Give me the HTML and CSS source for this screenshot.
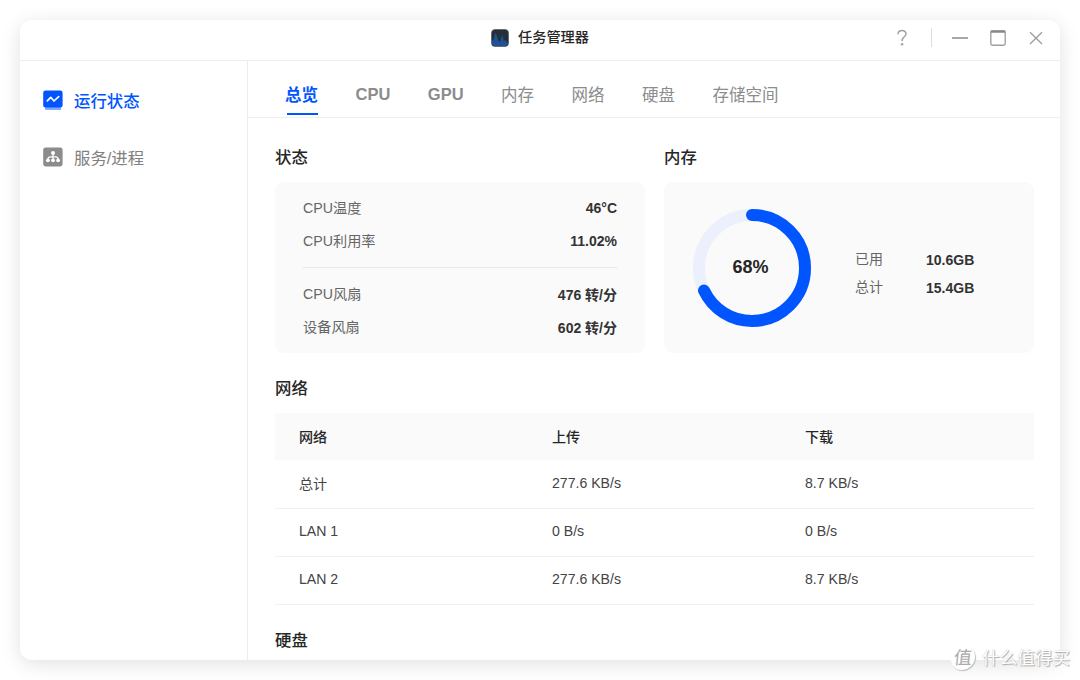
FILE: index.html
```
<!DOCTYPE html>
<html lang="zh-CN">
<head>
  <meta charset="UTF-8">
  <meta name="viewport" content="width=device-width, initial-scale=1">
  <title>任务管理器</title>
  <link rel="stylesheet" href="styles.css">
</head>
<body>

  <div class="window">
    <header class="titlebar">
      <div class="title">
        <svg class="app-icon" width="18" height="18" viewBox="0 0 18 18">
          <rect x="0.5" y="0.5" width="17" height="17" rx="3.5" fill="#252e3b" stroke="#5b6068" stroke-width="0.8"/>
          <path d="M1 15V12L2.6 10.5L4.6 3.5L6.6 9L8 13L9.3 12L11.2 5.5L12.8 12L14.2 11L16.9 14.5Q17 17 15 17H3Q1 17 1 15Z" fill="#1f5294"/>
        </svg>
        <span>任务管理器</span>
      </div>
      <div class="controls">
        <svg width="16" height="20" viewBox="0 0 16 20" fill="none" stroke="#a0a0a0" stroke-width="1.5">
          <path d="M4 6.2C4.2 1.4 12.2 1.5 12 6C11.9 8.8 8.1 9 8.1 12.9"/>
          <circle cx="8.1" cy="16.3" r="1.2" fill="#a0a0a0" stroke="none"/>
        </svg>
        <span class="split"></span>
        <svg width="18" height="18" viewBox="0 0 18 18" stroke="#a8a8a8" stroke-width="2">
          <path d="M1 9H17"/>
        </svg>
        <svg width="18" height="18" viewBox="0 0 18 18" fill="none" stroke="#a0a0a0" stroke-width="1.4">
          <rect x="1.8" y="1.8" width="14.4" height="14.4" rx="1.6"/>
          <path d="M1.8 2.7H16.2" stroke="#888" stroke-width="2"/>
        </svg>
        <svg width="18" height="18" viewBox="0 0 18 18" stroke="#a0a0a0" stroke-width="1.4">
          <path d="M3 3.2L15 15M15 3.2L3 15"/>
        </svg>
      </div>
    </header>

    <div class="body">
      <nav class="sidebar">
        <div class="nav-item active">
          <svg width="20" height="20" viewBox="0 0 20 20">
            <rect x="2" y="14" width="16" height="6" rx="1" fill="#80aaff"/>
            <rect x="0.2" y="0.4" width="19.4" height="17.2" rx="2.4" fill="#0055ff"/>
            <path d="M4.3 10.8L7.7 7.3L11 11L15.7 6.6" fill="none" stroke="#fff" stroke-width="1.7" stroke-linecap="round" stroke-linejoin="round"/>
          </svg>
          <span>运行状态</span>
        </div>
        <div class="nav-item">
          <svg width="20" height="20" viewBox="0 0 20 20">
            <rect x="0.2" y="0.4" width="19.4" height="19" rx="2.4" fill="#8c8c8c"/>
            <g fill="none" stroke="#fff" stroke-width="1.2">
              <path d="M10 7V12M4.8 12.5Q5 9.8 7.5 9.8H12.5Q15 9.8 15.2 12.5"/>
            </g>
            <g fill="#fff">
              <circle cx="10" cy="6" r="2"/>
              <circle cx="4.9" cy="13.3" r="1.9"/>
              <circle cx="10" cy="13.3" r="1.9"/>
              <circle cx="15.1" cy="13.3" r="1.9"/>
            </g>
          </svg>
          <span>服务/进程</span>
        </div>
      </nav>

      <main class="main">
        <div class="tabs">
          <div class="tab active">总览</div>
          <div class="tab latin">CPU</div>
          <div class="tab latin">GPU</div>
          <div class="tab">内存</div>
          <div class="tab">网络</div>
          <div class="tab">硬盘</div>
          <div class="tab">存储空间</div>
        </div>

        <div class="content">
          <div class="cards">
            <section>
              <h2>状态</h2>
              <div class="card status">
                <div class="row"><span>CPU温度</span><b>46°C</b></div>
                <div class="row"><span>CPU利用率</span><b>11.02%</b></div>
                <div class="divider"></div>
                <div class="row"><span>CPU风扇</span><b>476 转/分</b></div>
                <div class="row"><span>设备风扇</span><b>602 转/分</b></div>
              </div>
            </section>
            <section>
              <h2>内存</h2>
              <div class="card memory">
                <div class="ring">
                  <svg width="118" height="118" viewBox="0 0 118 118" fill="none" stroke-width="12">
                    <circle cx="59" cy="59" r="53" stroke="#ebf0fc"/>
                    <circle cx="59" cy="59" r="53" stroke="#0055ff" stroke-linecap="round" pathLength="100" stroke-dasharray="68 100" transform="rotate(-90 59 59)"/>
                  </svg>
                  <span class="percent">68%</span>
                </div>
                <div class="usage">
                  <span>已用</span><b>10.6GB</b>
                  <span>总计</span><b>15.4GB</b>
                </div>
              </div>
            </section>
          </div>

          <h2 class="net-title">网络</h2>
          <table>
            <thead>
              <tr><th>网络</th><th>上传</th><th>下载</th></tr>
            </thead>
            <tbody>
              <tr><td>总计</td><td>277.6 KB/s</td><td>8.7 KB/s</td></tr>
              <tr><td>LAN 1</td><td>0 B/s</td><td>0 B/s</td></tr>
              <tr><td>LAN 2</td><td>277.6 KB/s</td><td>8.7 KB/s</td></tr>
            </tbody>
          </table>

          <h2 class="disk-title">硬盘</h2>
        </div>
      </main>
    </div>
  </div>

  <div class="watermark">
    <span class="badge">值</span>
    <span>什么值得买</span>
  </div>

</body>
</html>
```
FILE: styles.css
```
* {
  box-sizing: border-box;
}
body {
  margin: 0;
  padding: 20px;
  height: 680px;
  overflow: hidden;
  background: #fff;
  color: #262626;
  font-family: "Liberation Sans", "Noto Sans CJK SC", sans-serif;
  font-size: 14px;
}
svg {
  display: block;
  flex: none;
}
.window {
  width: 1040px;
  height: 640px;
  display: flex;
  flex-direction: column;
  background: #fff;
  border-radius: 12px;
  box-shadow: 0 4px 20px rgba(0, 0, 0, 0.12);
  overflow: hidden;
}

/* title bar */
.titlebar {
  height: 41px;
  flex: none;
  display: grid;
  grid-template-columns: 1fr auto 1fr;
  align-items: center;
  padding-bottom: 5px;
  border-bottom: 1px solid #ededed;
}
.title {
  grid-column: 2;
  display: flex;
  align-items: center;
  gap: 9px;
  font-size: 14.2px;
  font-weight: 500;
  line-height: 20px;
}
.title span {
  margin-top: -2px;
}
.controls {
  display: flex;
  align-items: center;
  justify-content: flex-end;
  padding-right: 15px;
}
.controls svg + svg {
  margin-left: 20px;
}
.split {
  width: 1px;
  height: 19px;
  margin: 0 19px 0 21px;
  background: #ddd;
}

.body {
  flex: 1;
  display: flex;
  min-height: 0;
}

/* sidebar */
.sidebar {
  width: 228px;
  flex: none;
  padding: 11px 0 0 23px;
  border-right: 1px solid #ededed;
}
.nav-item {
  height: 56.5px;
  display: flex;
  align-items: center;
  gap: 11px;
  color: #808080;
  font-size: 16.4px;
}
.nav-item.active {
  color: #0055ff;
  font-weight: 500;
}

/* tabs */
.main {
  flex: 1;
}
.tabs {
  height: 57px;
  display: flex;
  gap: 37.5px;
  padding-left: 37px;
  border-bottom: 1px solid #efefef;
}
.tab {
  height: 54px;
  padding-top: 21px;
  line-height: 26px;
  font-size: 16.5px;
  color: #8c8c8c;
}
.tab.latin {
  padding-top: 20px;
  font-weight: bold;
}
.tab.active {
  color: #0055ff;
  font-weight: bold;
  background: linear-gradient(#0055ff, #0055ff) 2px 100% / 31px 2px no-repeat;
}

/* overview */
.content {
  padding: 26px 26px 0 27px;
}
h2 {
  margin: 0;
  font-size: 16.4px;
  line-height: 26px;
  font-weight: 500;
}
.cards {
  display: grid;
  grid-template-columns: 1fr 1fr;
  gap: 19px;
}
.card {
  height: 171px;
  margin-top: 12px;
  background: #fafafa;
  border-radius: 9px;
}
.status {
  padding: 9px 28px 0;
}
.row {
  height: 33px;
  display: flex;
  align-items: center;
  justify-content: space-between;
}
.row span,
.usage span {
  color: #666;
}
.row span {
  margin-top: -2px;
  font-size: 14.2px;
}
.row b,
.usage b {
  color: #333;
}
.divider {
  height: 1px;
  margin: 10px 0 9px;
  background: #e8e8e8;
}
.memory {
  display: flex;
  align-items: center;
  padding-left: 29px;
}
.ring {
  display: grid;
  place-items: center;
}
.ring > * {
  grid-area: 1 / 1;
}
.percent {
  padding-right: 3px;
  font-size: 18px;
  font-weight: bold;
}
.usage {
  display: grid;
  grid-template-columns: 71px auto;
  grid-auto-rows: 28px;
  align-items: center;
  margin: 12px 0 0 44px;
}
.usage span {
  margin-top: -3px;
}

.net-title {
  margin-top: 22px;
}
table {
  width: 100%;
  margin-top: 12px;
  table-layout: fixed;
  border-collapse: collapse;
}
th,
td {
  height: 48px;
  padding: 0 24px 2px;
  text-align: left;
  font-size: 14.1px;
}
th {
  height: 47px;
  font-weight: 500;
  background: #fafafa;
}
td {
  color: #444;
  border-bottom: 1px solid #efefef;
}
.disk-title {
  margin-top: 22px;
}

/* watermark laid over the window corner */
.watermark {
  position: absolute;
  left: 951px;
  top: 646px;
  display: flex;
  align-items: center;
  gap: 7px;
  color: #fff;
  font-size: 17.6px;
  line-height: 24px;
  white-space: nowrap;
  text-shadow: 1px 1px 1px #aaa, 0 0 1px #bbb;
}
.badge {
  width: 24px;
  height: 24px;
  border-radius: 50%;
  background: #fff;
  box-shadow: 1px 1px 1px #bbb;
  color: #aaa;
  font-size: 18px;
  text-align: center;
  text-shadow: none;
  transform: skewX(-6deg);
}
```
